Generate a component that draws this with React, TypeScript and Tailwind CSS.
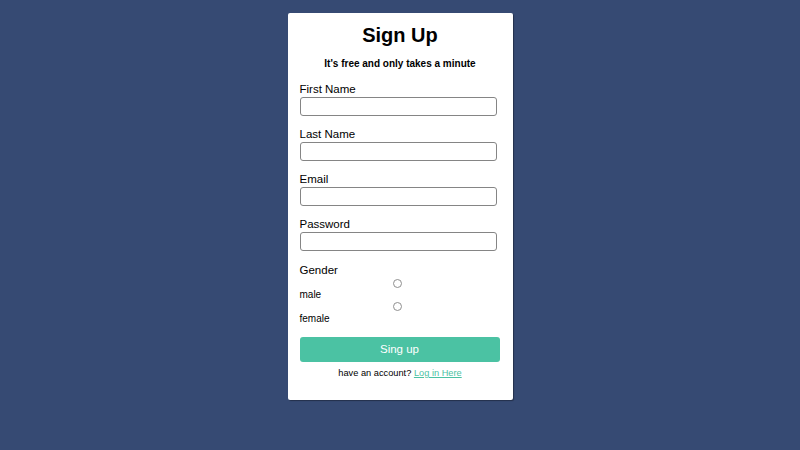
import React from 'react';

const fields = ['First Name', 'Last Name', 'Email', 'Password'];

const App: React.FC = () => {
  return (
    <div className="h-[450px] w-full bg-[#364a73] flex justify-center pt-[13px] font-['Liberation_Sans',Arial,sans-serif]">
      <div className="w-[225px] h-[387px] bg-white rounded-[2px] px-3 pt-[10px] shadow-[1px_1px_1px_rgba(0,0,0,0.35)]">
        <h1 className="text-center text-[20px] leading-[24px] font-bold text-black">Sign Up</h1>
        <p className="mt-[10px] text-center text-[10px] leading-[14px] font-bold text-black">It's free and only takes a minute</p>
        <div className="mt-[11px]">
          {fields.map((f) => (
            <div key={f} className="mb-[11px]">
              <label className="block text-[11.5px] leading-[14px] text-black">{f}</label>
              <input
                type={f === 'Password' ? 'password' : 'text'}
                className="mt-[1px] block w-[197px] h-[19px] border border-[#858585] rounded-[3px] bg-white"
              />
            </div>
          ))}
        </div>
        <div className="mt-[12px] text-[11.5px] leading-[14px] text-black">Gender</div>
        <div className="mt-[2px] flex flex-col">
          <span className="self-center ml-[-6px] w-[9px] h-[9px] rounded-full border border-[#8f8f8f] bg-white"></span>
          <span className="text-[10px] leading-[14px] text-black">male</span>
          <span className="self-center ml-[-6px] w-[9px] h-[9px] rounded-full border border-[#8f8f8f] bg-white"></span>
          <span className="mt-[1px] text-[10px] leading-[14px] text-black">female</span>
        </div>
        <button className="mt-[11px] w-[200px] h-[25px] rounded-[3px] bg-[#4bc2a3] text-white text-[11.5px]">Sing up</button>
        <p className="mt-[4px] text-center text-[9.25px] leading-[14px] text-black">
          have an account? <a href="#" className="text-[#4bc2a3] underline">Log in Here</a>
        </p>
      </div>
    </div>
  );
};

export default App;
